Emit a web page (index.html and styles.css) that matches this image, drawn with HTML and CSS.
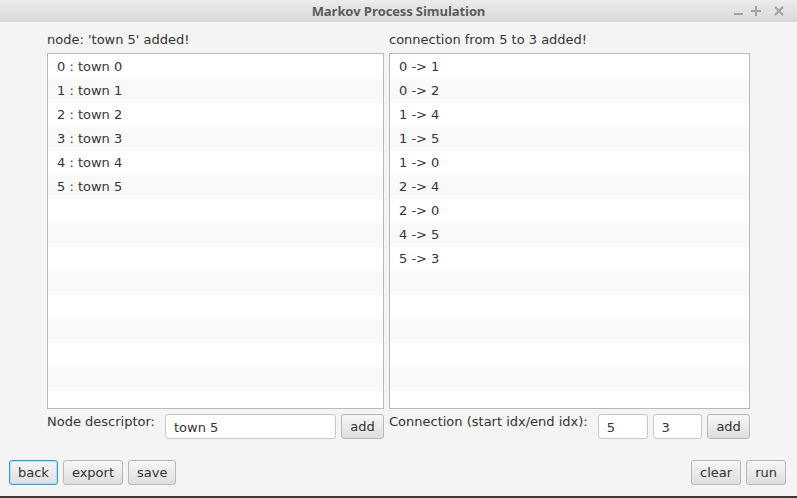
FILE: index.html
```html
<!DOCTYPE html>
<html>
<head>
<meta charset="utf-8">
<link rel="stylesheet" href="styles.css">
</head>
<body>
<div class="window">
  <div class="titlebar">
    <span class="title">Markov Process Simulation</span>
    <div class="controls">
      <svg class="min" width="12" height="12" viewBox="0 0 12 12"><rect x="1" y="8" width="9" height="2" fill="#a3a3a3"/></svg>
      <svg width="12" height="12" viewBox="0 0 12 12"><rect x="1" y="5" width="10" height="2" fill="#a3a3a3"/><rect x="5" y="1" width="2" height="10" fill="#a3a3a3"/></svg>
      <svg width="12" height="12" viewBox="0 0 12 12"><path d="M2 2 L10 10 M10 2 L2 10" stroke="#a3a3a3" stroke-width="2.2"/></svg>
    </div>
  </div>
  <div class="main">
    <div class="grid">
      <div class="label">node: 'town 5' added!</div>
      <div class="label">connection from 5 to 3 added!</div>
      <div class="list">
        <div class="row">0 : town 0</div>
        <div class="row">1 : town 1</div>
        <div class="row">2 : town 2</div>
        <div class="row">3 : town 3</div>
        <div class="row">4 : town 4</div>
        <div class="row">5 : town 5</div>
        <div class="row"></div><div class="row"></div><div class="row"></div>
        <div class="row"></div><div class="row"></div><div class="row"></div>
        <div class="row"></div><div class="row"></div><div class="row"></div>
      </div>
      <div class="list">
        <div class="row">0 -&gt; 1</div>
        <div class="row">0 -&gt; 2</div>
        <div class="row">1 -&gt; 4</div>
        <div class="row">1 -&gt; 5</div>
        <div class="row">1 -&gt; 0</div>
        <div class="row">2 -&gt; 4</div>
        <div class="row">2 -&gt; 0</div>
        <div class="row">4 -&gt; 5</div>
        <div class="row">5 -&gt; 3</div>
        <div class="row"></div><div class="row"></div><div class="row"></div>
        <div class="row"></div><div class="row"></div><div class="row"></div>
      </div>
      <div class="form">
        <span class="flabel">Node descriptor:</span>
        <div class="field wide">town 5</div>
        <button class="btn">add</button>
      </div>
      <div class="form">
        <span class="flabel">Connection (start idx/end idx):</span>
        <span class="spacer"></span>
        <div class="field small">5</div>
        <div class="field small">3</div>
        <button class="btn">add</button>
      </div>
    </div>
    <div class="bottom">
      <div class="group">
        <button class="btn focus">back</button>
        <button class="btn">export</button>
        <button class="btn">save</button>
      </div>
      <div class="group">
        <button class="btn">clear</button>
        <button class="btn">run</button>
      </div>
    </div>
  </div>
  <div class="edge"></div>
</div>
</body>
</html>
```

FILE: styles.css
```css
html, body {
  margin: 0;
  padding: 0;
}
body {
  width: 797px;
  height: 498px;
  overflow: hidden;
  font-family: "DejaVu Sans", sans-serif;
  font-size: 13px;
  color: #333333;
  background: #f4f4f4;
}
.window {
  display: flex;
  flex-direction: column;
  height: 498px;
}
.titlebar {
  height: 22px;
  flex: none;
  background: linear-gradient(#ebebeb, #d9d9d9);
  position: relative;
  display: flex;
  align-items: center;
  justify-content: center;
}
.title {
  font-family: "Open Sans", sans-serif;
  font-weight: 700;
  font-size: 13px;
  color: #5c5c5c;
  letter-spacing: -0.1px;
}
.controls {
  position: absolute;
  right: 12px;
  top: 5px;
  display: flex;
  gap: 11px;
}
.controls svg { display: block; }
.controls .min { margin-right: -6px; }
.main {
  flex: 1;
  display: flex;
  flex-direction: column;
  padding: 0 9px 0 9px;
}
.grid {
  display: grid;
  grid-template-columns: 337px 361px;
  column-gap: 5px;
  padding: 0 38px;
}
.label {
  height: 31px;
  padding-top: 10px;
  box-sizing: border-box;
  line-height: 15px;
}
.list {
  height: 356px;
  border: 1px solid #b9b9b9;
  box-sizing: border-box;
  background: #ffffff;
  overflow: hidden;
  padding-top: 1px;
}
.row {
  height: 24px;
  line-height: 24px;
  padding-left: 9px;
}
.row:nth-child(even) {
  background: #f9f9f9;
}
.form {
  display: flex;
  align-items: flex-start;
  gap: 5px;
  margin-top: 5px;
}
.flabel {
  line-height: 16px;
  white-space: nowrap;
}
.spacer { flex: 1; }
.field {
  height: 25px;
  box-sizing: border-box;
  border: 1px solid #c6c6c6;
  border-radius: 3px;
  background: #fff;
  line-height: 25px;
  padding-left: 8px;
}
.field.wide { width: 171px; margin-left: 5px; }
.field.small { width: 50px; }
.btn {
  font-family: "DejaVu Sans", sans-serif;
  font-size: 13px;
  color: #333;
  height: 25px;
  padding: 0 8px;
  border: 1px solid #b8b8b8;
  border-radius: 3px;
  background: linear-gradient(#f6f6f6, #dedede);
  box-sizing: border-box;
  margin: 0;
}
.form .btn { width: 43px; padding: 0; }
.btn.focus {
  border-color: #2aa1d4;
  box-shadow: inset 0 0 0 1px #b7dcee;
}
.bottom {
  display: flex;
  justify-content: space-between;
  margin-top: 21px;
  padding-right: 2px;
}
.group {
  display: flex;
  gap: 5px;
}
.edge {
  height: 2px;
  background: #3a3a3a;
  flex: none;
}
```
